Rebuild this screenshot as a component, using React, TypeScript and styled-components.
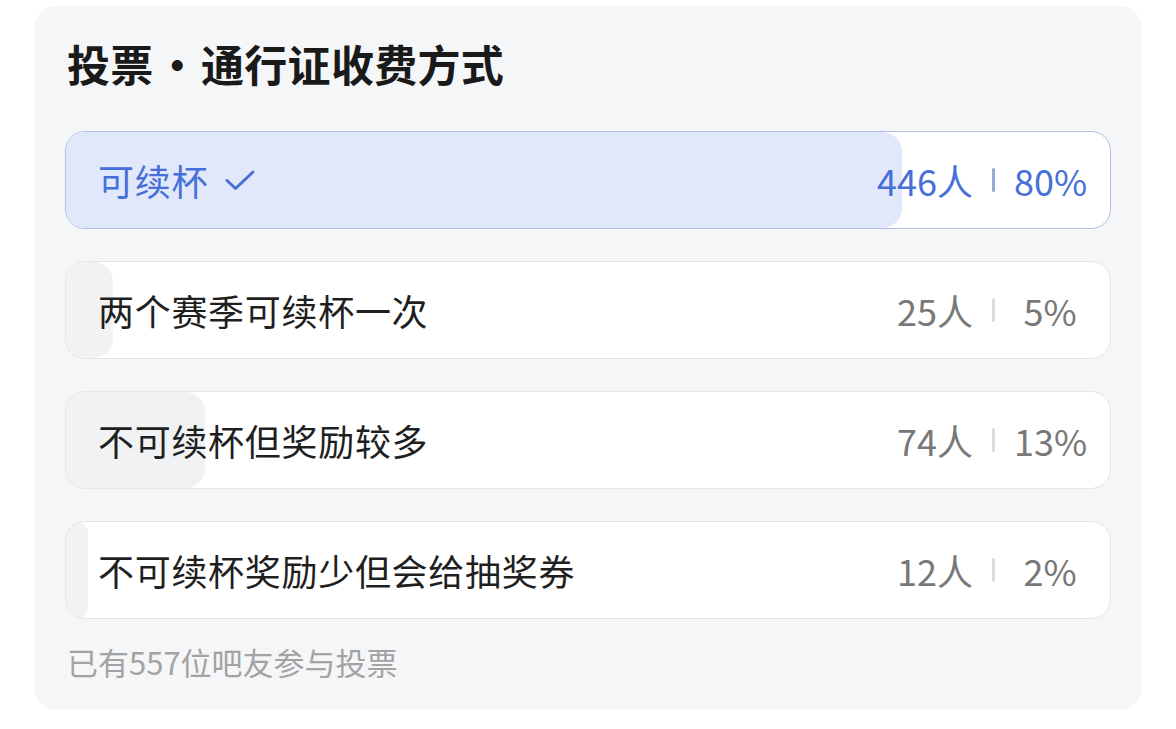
import styled, { createGlobalStyle } from 'styled-components';

const GlobalStyle = createGlobalStyle`
  body {
    margin: 0;
    background: #ffffff;
    font-family: 'Noto Sans CJK SC', 'Noto Sans', sans-serif;
  }
`;

const Page = styled.div`
  padding: 6px 34px;
`;

const Card = styled.div`
  background: #f5f6f8;
  border-radius: 22px;
  padding: 33px 31px 28px 31px;
`;

const Title = styled.h2`
  margin: 0 0 44px 2px;
  font-size: 43px;
  line-height: 48px;
  font-weight: 700;
  color: #1a1a1a;
  letter-spacing: 0.3px;
  word-spacing: -8px;
`;

const Options = styled.div`
  display: flex;
  flex-direction: column;
  gap: 32px;
`;

const Row = styled.div<{ $selected: boolean }>`
  position: relative;
  height: 98px;
  box-sizing: border-box;
  border: 1px solid ${p => (p.$selected ? '#b1bfe6' : '#e3e4e8')};
  border-radius: 20px;
  background: #ffffff;
  overflow: hidden;
  display: flex;
  align-items: center;
  padding: 0 24px 0 32px;
`;

const Fill = styled.div<{ $selected: boolean }>`
  position: absolute;
  left: 0;
  top: 0;
  bottom: 0;
  border-radius: 20px;
  background: ${p => (p.$selected ? '#e2e8fb' : '#f1f2f4')};
`;

const Label = styled.div<{ $selected: boolean }>`
  position: relative;
  flex: 1;
  display: flex;
  align-items: center;
  gap: 16px;
  font-size: 36px;
  letter-spacing: 0.7px;
  color: ${p => (p.$selected ? '#4670d8' : '#1f1f1f')};
`;

const Stats = styled.div<{ $selected: boolean }>`
  position: relative;
  display: flex;
  align-items: center;
  font-size: 36px;
  color: ${p => (p.$selected ? '#4670d8' : '#787878')};
`;

const Sep = styled.span<{ $selected: boolean }>`
  width: 3px;
  height: 24px;
  border-radius: 2px;
  margin: 0 19px 0 19px;
  background: ${p => (p.$selected ? '#97a9d9' : '#dcdcdc')};
`;

const Percent = styled.span`
  width: 72px;
  text-align: center;
`;

const Footer = styled.div`
  margin: 23px 0 0 2px;
  font-size: 31px;
  line-height: 40px;
  color: #a3a3a3;
`;

const options = [
  { text: '可续杯', count: 446, pct: '80%', selected: true },
  { text: '两个赛季可续杯一次', count: 25, pct: '5%', selected: false },
  { text: '不可续杯但奖励较多', count: 74, pct: '13%', selected: false },
  { text: '不可续杯奖励少但会给抽奖券', count: 12, pct: '2%', selected: false },
];

const total = 557;

function Check() {
  return (
    <svg width="32" height="24" viewBox="0 0 32 24" fill="none">
      <path d="M3 12.5 L11.5 20.5 L29 4" stroke="#4670d8" strokeWidth="3" strokeLinecap="round" strokeLinejoin="round" />
    </svg>
  );
}

export default function App() {
  return (
    <Page>
      <GlobalStyle />
      <Card>
        <Title>投票 · 通行证收费方式</Title>
        <Options>
          {options.map(o => (
            <Row key={o.text} $selected={o.selected}>
              <Fill $selected={o.selected} style={{ width: `${(o.count / total) * 100}%` }} />
              <Label $selected={o.selected}>
                {o.text}
                {o.selected && <Check />}
              </Label>
              <Stats $selected={o.selected}>
                <span>{o.count}人</span>
                <Sep $selected={o.selected} />
                <Percent>{o.pct}</Percent>
              </Stats>
            </Row>
          ))}
        </Options>
        <Footer>已有557位吧友参与投票</Footer>
      </Card>
    </Page>
  );
}
